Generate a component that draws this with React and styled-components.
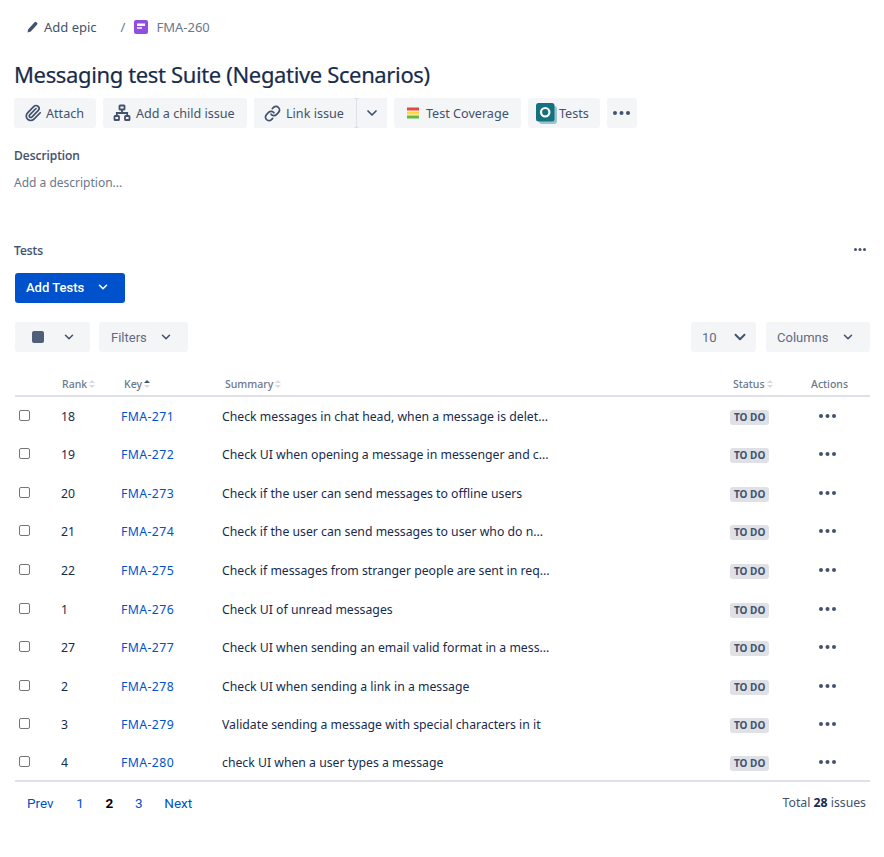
import styled, { createGlobalStyle } from "styled-components";
import { ChevronDown, Paperclip, Link } from "lucide-react";

const GlobalStyle = createGlobalStyle`
  html, body {
    margin: 0;
    background: #fff;
    color: #172b4d;
    font-family: "Noto Sans", "Open Sans", sans-serif;
  }
`;

const Page = styled.div`
  width: 884px;
  height: 857px;
  box-sizing: border-box;
  padding: 17px 14px 0 14px;
  overflow: hidden;
`;

const Breadcrumbs = styled.div`
  display: flex;
  align-items: center;
  height: 20px;
  font-size: 13px;
  padding-left: 13px;
  color: #42526e;
`;

const EpicLink = styled.span`
  display: flex;
  align-items: center;
  gap: 6px;
  color: #42526e;
`;

const Slash = styled.span`
  margin: 0 9px 0 24px;
  color: #6b778c;
`;

const IssueKey = styled.span`
  margin-left: 8px;
  color: #6b778c;
`;

const Title = styled.h1`
  margin: 19px 0 0;
  font-size: 22px;
  line-height: 36px;
  font-weight: 400;
  letter-spacing: -0.36px;
  color: #172b4d;
  white-space: nowrap;
  -webkit-text-stroke: 0.2px #172b4d;
`;

const Toolbar = styled.div`
  display: flex;
  gap: 7px;
  margin-top: 6px;
`;

const ToolButton = styled.button`
  display: flex;
  align-items: center;
  gap: ${(p) => p.$gap || 5}px;
  height: 30px;
  width: ${(p) => p.$w}px;
  padding: 0 0 0 ${(p) => p.$pad ?? 10}px;
  border: none;
  border-radius: 3px;
  background: #f4f5f7;
  color: #42526e;
  font-family: inherit;
  font-size: 12.6px;
  white-space: nowrap;
`;

const SplitGroup = styled.div`
  display: flex;
  gap: 1px;
  border-radius: 3px;
  background: #dfe1e6;
`;

const SectionLabel = styled.div`
  font-size: 12px;
  line-height: 16px;
  font-weight: 500;
  color: #42526e;
  -webkit-text-stroke: 0.15px #42526e;
`;

const DescriptionLabel = styled(SectionLabel)`
  margin-top: 20px;
`;

const DescriptionHint = styled.div`
  margin-top: 11px;
  font-size: 12px;
  line-height: 16px;
  color: #6b778c;
`;

const TestsHeader = styled.div`
  display: flex;
  justify-content: space-between;
  align-items: center;
  margin-top: 52px;
`;

const HeaderMenu = styled.div`
  display: flex;
  margin: -3px 4px 0 0;
`;

const AddTests = styled.button`
  display: flex;
  align-items: center;
  justify-content: space-between;
  box-sizing: border-box;
  width: 110px;
  height: 30px;
  margin: 14px 0 0 1px;
  padding: 0 15px 2px 11px;
  border: none;
  border-radius: 3px;
  background: #0052cc;
  color: #fff;
  font-family: "Roboto", sans-serif;
  font-size: 13px;
  font-weight: 500;
`;

const Controls = styled.div`
  display: flex;
  justify-content: space-between;
  margin: 19px 0 0 1px;
`;

const ControlGroup = styled.div`
  display: flex;
  gap: ${(p) => p.$gap}px;
`;

const Select = styled.div`
  display: flex;
  align-items: center;
  justify-content: space-between;
  box-sizing: border-box;
  width: ${(p) => p.$w}px;
  height: 30px;
  padding: 0 ${(p) => p.$right}px 0 ${(p) => p.$left}px;
  border-radius: 3px;
  background: #f4f5f7;
  color: #5e6c84;
  font-family: "Roboto", sans-serif;
  font-size: 13px;
`;

const SelectSquare = styled.span`
  width: 12px;
  height: 12px;
  border-radius: 2px;
  background: #505f79;
`;

const Table = styled.table`
  width: 855px;
  margin: 17px 0 0 1px;
  border-collapse: collapse;
  table-layout: fixed;
  border-bottom: 2px solid #dfe1e6;
`;

const HeadRow = styled.tr`
  height: 27px;
  border-bottom: 2px solid #dfe1e6;
`;

const HeadCell = styled.th`
  padding: 3px 0 0 ${(p) => p.$pad || 0}px;
  font-size: 10.5px;
  font-weight: 500;
  text-align: left;
  color: #6b778c;
  white-space: nowrap;
`;

const SortMark = styled.svg`
  width: 6px;
  height: 8px;
  margin-left: 2px;
`;

const Row = styled.tr`
  height: 38.55px;
`;

const Cell = styled.td`
  padding: 2px 0 0;
  font-size: 12.25px;
  color: #172b4d;
  white-space: nowrap;
  overflow: hidden;
`;

const ActionCell = styled(Cell)`
  padding-left: 12px;
  svg {
    display: block;
    margin-top: -1px;
  }
`;

const RowCheck = styled.span`
  display: block;
  box-sizing: border-box;
  width: 11px;
  height: 11px;
  margin: -2px 0 0 4px;
  border: 1px solid #767676;
  border-radius: 2px;
  background: #fff;
`;

const KeyLink = styled.a`
  color: #0052cc;
  letter-spacing: 0.4px;
  text-decoration: none;
`;

const Lozenge = styled.span`
  display: inline-block;
  padding: 0 4px;
  border-radius: 3px;
  background: #dfe1e6;
  color: #42526e;
  font-size: 10px;
  line-height: 15px;
  font-weight: 700;
`;

const Footer = styled.div`
  display: flex;
  justify-content: space-between;
  align-items: center;
  width: 855px;
  margin: 12px 0 0 1px;
  font-size: 12.25px;
`;

const Pager = styled.div`
  display: flex;
  gap: 21.7px;
  padding-left: 12px;
  font-family: "Roboto", sans-serif;
  font-size: 13.5px;
  color: #0052cc;
`;

const PageLink = styled.span`
  color: ${(p) => (p.$current ? "#000" : "#0052cc")};
  font-weight: ${(p) => (p.$current ? 700 : 400)};
  &:first-child {
    margin-right: 1px;
  }
`;

const Total = styled.div`
  padding-right: 4px;
  color: #42526e;
  b {
    color: #172b4d;
  }
`;

function Dots({ size = 4, gap = 2.5, color = "#42526e" }) {
  const w = size * 3 + gap * 2;
  return (
    <svg width={w} height={size} viewBox={`0 0 ${w} ${size}`}>
      {[0, 1, 2].map((i) => (
        <circle key={i} cx={size / 2 + i * (size + gap)} cy={size / 2} r={size / 2} fill={color} />
      ))}
    </svg>
  );
}

function Sort({ up }) {
  return (
    <SortMark viewBox="0 0 6 8">
      <path d="M0 3 L3 0 L6 3 Z" fill={up ? "#42526e" : "#d5d9e0"} />
      <path d="M0 5 L3 8 L6 5 Z" fill="#d5d9e0" />
    </SortMark>
  );
}

function Chevron({ size = 16, color = "#42526e" }) {
  return <ChevronDown size={size} color={color} strokeWidth={2.6} />;
}

const rows = [
  ["18", "FMA-271", "Check messages in chat head, when a message is delet..."],
  ["19", "FMA-272", "Check UI when opening a message in messenger and c..."],
  ["20", "FMA-273", "Check if the user can send messages to offline users"],
  ["21", "FMA-274", "Check if the user can send messages to user who do n..."],
  ["22", "FMA-275", "Check if messages from stranger people are sent in req..."],
  ["1", "FMA-276", "Check UI of unread messages"],
  ["27", "FMA-277", "Check UI when sending an email valid format in a mess..."],
  ["2", "FMA-278", "Check UI when sending a link in a message"],
  ["3", "FMA-279", "Validate sending a message with special characters in it"],
  ["4", "FMA-280", "check UI when a user types a message"],
];

export default function App() {
  return (
    <Page>
      <GlobalStyle />
      <Breadcrumbs>
        <EpicLink>
          <svg width="11" height="12" viewBox="0 0 11 12">
            <path d="M0.5 11.5 L1.2 8.2 L7.6 1.2 Q8.3 0.5 9.1 1.1 L10.2 2.1 Q10.9 2.9 10.2 3.6 L3.8 10.6 Z" fill="#42526e" />
          </svg>
          Add epic
        </EpicLink>
        <Slash>/</Slash>
        <svg width="14" height="14" viewBox="0 0 14 14">
          <rect width="14" height="14" rx="2" fill="#904ee2" />
          <rect x="3" y="3.5" width="8" height="2.5" fill="#fff" />
          <rect x="3" y="7" width="5" height="2" fill="#e3d0f8" />
        </svg>
        <IssueKey>FMA-260</IssueKey>
      </Breadcrumbs>
      <Title>Messaging test Suite (Negative Scenarios)</Title>
      <Toolbar>
        <ToolButton $w={82} $gap={4}>
          <Paperclip size={18} color="#42526e" strokeWidth={2.3} />
          Attach
        </ToolButton>
        <ToolButton $w={144} $gap={5}>
          <svg width="18" height="18" viewBox="0 0 18 18" fill="none" stroke="#42526e" strokeWidth="1.8">
            <rect x="6.5" y="1.5" width="5" height="4" rx="0.6" />
            <rect x="1.5" y="12" width="4.5" height="4" rx="0.6" />
            <rect x="12" y="12" width="4.5" height="4" rx="0.6" />
            <path d="M9 5.5 V9 M3.8 12 V9 H14.2 V12" />
          </svg>
          Add a child issue
        </ToolButton>
        <SplitGroup>
          <ToolButton $w={102} $gap={5}>
            <Link size={17} color="#42526e" strokeWidth={2.4} />
            Link issue
          </ToolButton>
          <ToolButton $w={30} $pad={7}>
            <Chevron />
          </ToolButton>
        </SplitGroup>
        <ToolButton $w={127} $pad={13} $gap={7}>
          <svg width="12" height="12" viewBox="0 0 12 12">
            <rect y="0.5" width="12" height="3" fill="#e5493a" />
            <rect y="4.5" width="12" height="3" fill="#ffd740" />
            <rect y="8.5" width="12" height="3" fill="#63ba3c" />
          </svg>
          Test Coverage
        </ToolButton>
        <ToolButton $w={72} $pad={8} $gap={2}>
          <svg width="21" height="21" viewBox="0 0 21 21">
            <rect x="3" y="3" width="18" height="18" rx="3" fill="#9cc5ca" />
            <rect width="18.5" height="18.5" rx="2.5" fill="#14727f" />
            <circle cx="9.2" cy="9.2" r="4.2" fill="none" stroke="#fff" strokeWidth="2.2" />
          </svg>
          Tests
        </ToolButton>
        <ToolButton $w={30} $pad={6}>
          <Dots />
        </ToolButton>
      </Toolbar>
      <DescriptionLabel>Description</DescriptionLabel>
      <DescriptionHint>Add a description...</DescriptionHint>
      <TestsHeader>
        <SectionLabel>Tests</SectionLabel>
        <HeaderMenu>
          <Dots size={3} gap={1.5} />
        </HeaderMenu>
      </TestsHeader>
      <AddTests>
        Add Tests
        <Chevron size={14} color="#fff" />
      </AddTests>
      <Controls>
        <ControlGroup $gap={9}>
          <Select $w={75} $left={17} $right={14}>
            <SelectSquare />
            <Chevron size={14} />
          </Select>
          <Select $w={89} $left={12} $right={15}>
            Filters
            <Chevron size={14} />
          </Select>
        </ControlGroup>
        <ControlGroup $gap={10}>
          <Select $w={65} $left={11} $right={7}>
            10
            <Chevron size={18} />
          </Select>
          <Select $w={104} $left={11} $right={15}>
            Columns
            <Chevron size={14} />
          </Select>
        </ControlGroup>
      </Controls>
      <Table>
        <colgroup>
          <col style={{ width: 46 }} />
          <col style={{ width: 60 }} />
          <col style={{ width: 101 }} />
          <col style={{ width: 508 }} />
          <col style={{ width: 77 }} />
          <col />
        </colgroup>
        <thead>
          <HeadRow>
            <HeadCell />
            <HeadCell $pad={1}>Rank<Sort /></HeadCell>
            <HeadCell $pad={3}>Key<Sort up /></HeadCell>
            <HeadCell $pad={3}>Summary<Sort /></HeadCell>
            <HeadCell $pad={3}>Status<Sort /></HeadCell>
            <HeadCell $pad={4}>Actions</HeadCell>
          </HeadRow>
        </thead>
        <tbody>
          {rows.map(([rank, key, summary]) => (
            <Row key={key}>
              <Cell><RowCheck /></Cell>
              <Cell>{rank}</Cell>
              <Cell><KeyLink>{key}</KeyLink></Cell>
              <Cell>{summary}</Cell>
              <Cell><Lozenge>TO DO</Lozenge></Cell>
              <ActionCell><Dots /></ActionCell>
            </Row>
          ))}
        </tbody>
      </Table>
      <Footer>
        <Pager>
          <PageLink>Prev</PageLink>
          <PageLink>1</PageLink>
          <PageLink $current>2</PageLink>
          <PageLink>3</PageLink>
          <PageLink>Next</PageLink>
        </Pager>
        <Total>Total <b>28</b> issues</Total>
      </Footer>
    </Page>
  );
}
